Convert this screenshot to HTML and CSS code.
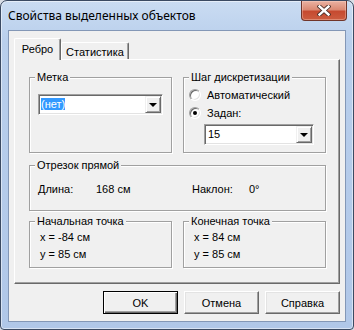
FILE: index.html
```html
<!DOCTYPE html>
<html lang="ru">
<head>
    <meta charset="UTF-8">
    <title>Свойства выделенных объектов</title>
    <link rel="stylesheet" href="styles.css">
</head>
<body>
    <div class="window">
        <div class="titlebar">
            <span class="title">Свойства выделенных объектов</span>
            <button class="close" aria-label="Закрыть">
                <svg width="14" height="11" viewBox="0 0 14 11">
                    <path d="M2.5 1.5 L11.5 9.5 M11.5 1.5 L2.5 9.5" stroke="#4a2e28" stroke-width="4.2" stroke-linecap="square"/>
                    <path d="M2.5 1.5 L11.5 9.5 M11.5 1.5 L2.5 9.5" stroke="#fff" stroke-width="2.4" stroke-linecap="square"/>
                </svg>
            </button>
        </div>

        <div class="client">
            <div class="tabs">
                <div class="tab tab-edge">Ребро</div>
                <div class="tab tab-stats">Статистика</div>
            </div>

            <div class="panel">
                <div class="row">
                    <div class="group label-group">
                        <span class="group-title">Метка</span>
                        <div class="combo combo-label">
                            <div class="combo-text"><span class="sel">(нет)</span></div>
                            <div class="combo-btn"></div>
                        </div>
                    </div>
                    <div class="group step-group">
                        <span class="group-title">Шаг дискретизации</span>
                        <div class="radio"><span class="radio-dot"></span>Автоматический</div>
                        <div class="radio"><span class="radio-dot on"></span>Задан:</div>
                        <div class="combo combo-step">
                            <div class="combo-text">15</div>
                            <div class="combo-btn"></div>
                        </div>
                    </div>
                </div>

                <div class="group segment-group">
                    <span class="group-title">Отрезок прямой</span>
                    <span>Длина:</span>
                    <span>168 см</span>
                    <span>Наклон:</span>
                    <span>0°</span>
                </div>

                <div class="row points">
                    <div class="group point-group">
                        <span class="group-title">Начальная точка</span>
                        <div>x = -84 см</div>
                        <div>y = 85 см</div>
                    </div>
                    <div class="group point-group">
                        <span class="group-title">Конечная точка</span>
                        <div>x = 84 см</div>
                        <div>y = 85 см</div>
                    </div>
                </div>
            </div>

            <div class="actions">
                <button class="btn btn-default">OK</button>
                <button class="btn">Отмена</button>
                <button class="btn">Справка</button>
            </div>
        </div>
    </div>
</body>
</html>
```

FILE: styles.css
```css
* {
    box-sizing: border-box;
}
body {
    margin: 0;
    background: #d9dee6;
    font-family: "Liberation Sans", Arial, sans-serif;
    font-size: 11px;
    color: #000;
}
.window {
    width: 354px;
    height: 330px;
    border: 1px solid #3b4a62;
    border-radius: 7px 7px 4px 4px;
    background: linear-gradient(#cadcf2, #b9cfec 40px, #b0c7e8);
    box-shadow: inset 0 0 0 1px rgba(255, 255, 255, 0.5);
    display: flex;
    flex-direction: column;
}
.titlebar {
    height: 29px;
    display: flex;
    align-items: flex-start;
    padding-left: 7px;
}
.title {
    font-family: "Noto Sans", sans-serif;
    font-size: 12px;
    line-height: 16px;
    padding-top: 7px;
}
.close {
    margin-left: auto;
    margin-right: 6px;
    width: 46px;
    height: 20px;
    padding: 0;
    border: 1px solid #70352a;
    border-top: none;
    border-radius: 0 0 4px 4px;
    background: linear-gradient(#eab2a2, #db8a74 45%, #c64a30 55%, #cc5d40);
    box-shadow: inset 0 0 0 1px rgba(255, 220, 210, 0.35);
    display: flex;
    align-items: center;
    justify-content: center;
}
.client {
    margin: 0 7px 7px;
    height: 292px;
    border: 1px solid #8397b6;
    background: #f0f0f0;
    padding: 7px 5px;
    display: flex;
    flex-direction: column;
}

/* tabs */
.tabs {
    display: flex;
    align-items: flex-end;
    height: 21px;
}
.tab {
    height: 17px;
    padding-top: 3px;
    line-height: 13px;
    text-align: center;
    border: 1px solid;
    border-color: #fff #696969 transparent #fff;
    border-bottom: none;
    border-radius: 2px 2px 0 0;
    box-shadow: inset -1px 0 #a0a0a0;
}
.tab-edge {
    width: 47px;
    height: 22px;
    margin-bottom: -1px;
    padding-top: 4px;
    position: relative;
    background: #f0f0f0;
}
.tab-stats {
    width: 68px;
}
.panel {
    height: 225px;
    border: 1px solid;
    border-color: #fff #696969 #696969 #fff;
    box-shadow: inset -1px -1px #a0a0a0;
    padding: 17px 13px 0 14px;
    display: flex;
    flex-direction: column;
}

/* group boxes */
.row {
    display: flex;
    gap: 11px;
}
.group {
    position: relative;
    border: 1px solid #a0a0a0;
    box-shadow: inset 1px 1px #fff, 1px 1px #fff;
}
.row .group {
    width: 143px;
}
.group-title {
    position: absolute;
    top: -7px;
    left: 5px;
    padding: 0 2px;
    line-height: 13px;
    background: #f0f0f0;
}
.label-group {
    height: 76px;
    padding: 16px 0 0 8px;
}
.step-group {
    height: 76px;
    padding: 8px 0 0 5px;
}
.segment-group {
    height: 46px;
    margin-top: 12px;
    padding: 17px 0 0 8px;
    line-height: 13px;
    display: grid;
    grid-template-columns: 58px 96px 57px auto;
    align-content: start;
}
.points {
    margin-top: 10px;
}
.point-group {
    height: 47px;
    padding: 7px 0 0 10px;
    line-height: 17px;
}

/* combo boxes */
.combo {
    display: flex;
    height: 21px;
    padding: 1px;
    border: 1px solid;
    border-color: #a0a0a0 #fff #fff #a0a0a0;
    box-shadow: inset 1px 1px #696969, inset -1px -1px #e3e3e3;
    background: #fff;
}
.combo-label {
    width: 125px;
}
.combo-step {
    width: 110px;
    margin: 2px 0 0 15px;
}
.combo-text {
    flex: 1;
    padding-left: 1px;
    line-height: 17px;
}
.combo-step .combo-text {
    padding-left: 2px;
}
.sel {
    background: #3399ff;
    color: #fff;
}
.combo-btn {
    width: 16px;
    height: 17px;
    border: 1px solid;
    border-color: #f0f0f0 #696969 #696969 #f0f0f0;
    box-shadow: inset 1px 1px #fff, inset -1px -1px #a0a0a0;
    background: #f0f0f0;
    display: flex;
    align-items: center;
    justify-content: center;
    padding-top: 1px;
}
.combo-btn::after {
    content: "";
    border-top: 4px solid #000;
    border-left: 4px solid transparent;
    border-right: 4px solid transparent;
}

/* radio buttons */
.radio {
    display: flex;
    align-items: center;
    gap: 6px;
    height: 18px;
}
.radio-dot {
    width: 12px;
    height: 12px;
    border-radius: 50%;
    border: 1px solid;
    border-color: #a0a0a0 #fff #fff #a0a0a0;
    box-shadow: inset 1px 1px #696969, inset -1px -1px #e3e3e3;
    background: #fff;
    display: flex;
    align-items: center;
    justify-content: center;
}
.radio-dot.on::after {
    content: "";
    width: 4px;
    height: 4px;
    border-radius: 50%;
    background: #000;
}

/* buttons */
.actions {
    display: flex;
    justify-content: flex-end;
    gap: 6px;
    margin-top: 7px;
}
.btn {
    width: 75px;
    height: 23px;
    padding: 0;
    font: inherit;
    color: #000;
    background: #f0f0f0;
    border: 1px solid;
    border-color: #fff #696969 #696969 #fff;
    box-shadow: inset -1px -1px #a0a0a0, inset 1px 1px #e3e3e3;
}
.btn-default {
    border-color: #000;
    box-shadow: inset 1px 1px #fff, inset -1px -1px #696969, inset -2px -2px #a0a0a0;
}
```
